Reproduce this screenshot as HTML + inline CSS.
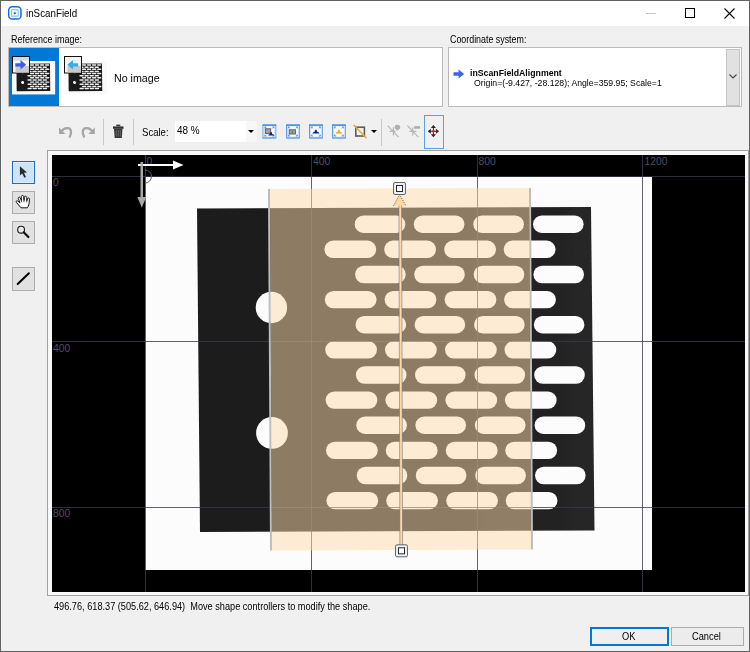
<!DOCTYPE html>
<html><head><meta charset="utf-8"><style>
*{margin:0;padding:0;box-sizing:border-box}
html,body{width:750px;height:652px;overflow:hidden}
body{background:#f0f0f0;font-family:"Liberation Sans",sans-serif;position:relative;color:#000}
.a{position:absolute}
.t{position:absolute;white-space:pre;line-height:1;transform-origin:0 0}
</style></head><body>
<!-- window frame -->
<div class="a" style="left:0;top:0;width:750px;height:26px;background:#fff"></div>
<div class="a" style="left:0;top:0;width:750px;height:1px;background:#626262"></div>
<div class="a" style="left:0;top:0;width:1px;height:652px;background:#626262"></div>
<div class="a" style="left:749px;top:0;width:1px;height:652px;background:#626262"></div>
<div class="a" style="left:0;top:651px;width:750px;height:1px;background:#626262"></div>

<!-- title -->
<svg class="a" style="left:7px;top:5px" width="16" height="16" viewBox="7 5 16 16">
<rect x="8.7" y="6.7" width="12.3" height="12.4" rx="3.6" fill="#fff" stroke="#0b6fe2" stroke-width="1.5"/>
<rect x="10.4" y="8.4" width="8.9" height="9" rx="1.8" fill="#d4e8fd" stroke="#fff" stroke-width="0.8"/>
<rect x="11.6" y="9.6" width="6.5" height="6.6" rx="1.2" fill="#fff" stroke="#8fc4f8" stroke-width="1.2"/>
<rect x="13" y="11" width="3.7" height="3.8" rx="0.8" fill="#e2f0fe"/>
<circle cx="14.8" cy="13.3" r="0.95" fill="#124399"/>
</svg>
<div class="t" style="left:26px;top:8px;font-size:11px;transform:scaleX(0.89)">inScanField</div>
<div class="a" style="left:646px;top:13px;width:10px;height:1px;background:#c8c8c8"></div>
<div class="a" style="left:685px;top:8px;width:10px;height:10px;border:1px solid #000"></div>
<svg class="a" style="left:724px;top:8px" width="11" height="11" viewBox="0 0 11 11"><path d="M0.5 0.5L10.5 10.5M10.5 0.5L0.5 10.5" stroke="#000" stroke-width="1.1"/></svg>

<!-- labels -->
<div class="t" style="left:11px;top:34px;font-size:10.5px;transform:scaleX(0.856)">Reference image:</div>
<div class="t" style="left:450px;top:34px;font-size:10.5px;transform:scaleX(0.844)">Coordinate system:</div>

<!-- reference listbox -->
<div class="a" style="left:8px;top:47px;width:435px;height:60px;background:#fff;border:1px solid #bababa"></div>
<div class="a" style="left:9px;top:48px;width:50px;height:58px;background:#0078d7"></div>
<div class="a" style="left:12px;top:61px;width:43px;height:33px;background:#fff"></div>


<svg class="a" style="left:8px;top:50px" width="100" height="50" viewBox="8 50 100 50">

<g transform="translate(12,61) scale(0.0851) translate(-145,-177)">
<rect x="145" y="177" width="507" height="393" fill="#fafafa"/>
<polygon points="197,208.5 591,207 594.5,530.5 200,532" fill="#1a1a1a"/>
<rect x="354.7" y="215.5" width="50.6" height="17.4" rx="8.7" fill="#f0f0f0"/>
<rect x="413.8" y="215.5" width="50.6" height="17.4" rx="8.7" fill="#f0f0f0"/>
<rect x="473.3" y="215.5" width="50.6" height="17.4" rx="8.7" fill="#f0f0f0"/>
<rect x="533.0" y="215.5" width="50.6" height="17.4" rx="8.7" fill="#f0f0f0"/>
<rect x="324.4" y="240.6" width="51.8" height="17.4" rx="8.7" fill="#f0f0f0"/>
<rect x="384.2" y="240.6" width="51.8" height="17.4" rx="8.7" fill="#f0f0f0"/>
<rect x="444.2" y="240.6" width="51.8" height="17.4" rx="8.7" fill="#f0f0f0"/>
<rect x="503.7" y="240.6" width="51.8" height="17.4" rx="8.7" fill="#f0f0f0"/>
<rect x="355.1" y="265.8" width="50.6" height="17.4" rx="8.7" fill="#f0f0f0"/>
<rect x="414.2" y="265.8" width="50.6" height="17.4" rx="8.7" fill="#f0f0f0"/>
<rect x="473.7" y="265.8" width="50.6" height="17.4" rx="8.7" fill="#f0f0f0"/>
<rect x="533.4" y="265.8" width="50.6" height="17.4" rx="8.7" fill="#f0f0f0"/>
<rect x="324.8" y="290.9" width="51.8" height="17.4" rx="8.7" fill="#f0f0f0"/>
<rect x="384.6" y="290.9" width="51.8" height="17.4" rx="8.7" fill="#f0f0f0"/>
<rect x="444.6" y="290.9" width="51.8" height="17.4" rx="8.7" fill="#f0f0f0"/>
<rect x="504.1" y="290.9" width="51.8" height="17.4" rx="8.7" fill="#f0f0f0"/>
<rect x="355.5" y="316.0" width="50.6" height="17.4" rx="8.7" fill="#f0f0f0"/>
<rect x="414.6" y="316.0" width="50.6" height="17.4" rx="8.7" fill="#f0f0f0"/>
<rect x="474.1" y="316.0" width="50.6" height="17.4" rx="8.7" fill="#f0f0f0"/>
<rect x="533.8" y="316.0" width="50.6" height="17.4" rx="8.7" fill="#f0f0f0"/>
<rect x="325.2" y="341.1" width="51.8" height="17.4" rx="8.7" fill="#f0f0f0"/>
<rect x="385.0" y="341.1" width="51.8" height="17.4" rx="8.7" fill="#f0f0f0"/>
<rect x="445.0" y="341.1" width="51.8" height="17.4" rx="8.7" fill="#f0f0f0"/>
<rect x="504.5" y="341.1" width="51.8" height="17.4" rx="8.7" fill="#f0f0f0"/>
<rect x="355.9" y="366.3" width="50.6" height="17.4" rx="8.7" fill="#f0f0f0"/>
<rect x="415.0" y="366.3" width="50.6" height="17.4" rx="8.7" fill="#f0f0f0"/>
<rect x="474.5" y="366.3" width="50.6" height="17.4" rx="8.7" fill="#f0f0f0"/>
<rect x="534.2" y="366.3" width="50.6" height="17.4" rx="8.7" fill="#f0f0f0"/>
<rect x="325.6" y="391.4" width="51.8" height="17.4" rx="8.7" fill="#f0f0f0"/>
<rect x="385.4" y="391.4" width="51.8" height="17.4" rx="8.7" fill="#f0f0f0"/>
<rect x="445.4" y="391.4" width="51.8" height="17.4" rx="8.7" fill="#f0f0f0"/>
<rect x="504.9" y="391.4" width="51.8" height="17.4" rx="8.7" fill="#f0f0f0"/>
<rect x="356.3" y="416.5" width="50.6" height="17.4" rx="8.7" fill="#f0f0f0"/>
<rect x="415.4" y="416.5" width="50.6" height="17.4" rx="8.7" fill="#f0f0f0"/>
<rect x="474.9" y="416.5" width="50.6" height="17.4" rx="8.7" fill="#f0f0f0"/>
<rect x="534.6" y="416.5" width="50.6" height="17.4" rx="8.7" fill="#f0f0f0"/>
<rect x="326.0" y="441.7" width="51.8" height="17.4" rx="8.7" fill="#f0f0f0"/>
<rect x="385.8" y="441.7" width="51.8" height="17.4" rx="8.7" fill="#f0f0f0"/>
<rect x="445.8" y="441.7" width="51.8" height="17.4" rx="8.7" fill="#f0f0f0"/>
<rect x="505.3" y="441.7" width="51.8" height="17.4" rx="8.7" fill="#f0f0f0"/>
<rect x="356.7" y="466.8" width="50.6" height="17.4" rx="8.7" fill="#f0f0f0"/>
<rect x="415.8" y="466.8" width="50.6" height="17.4" rx="8.7" fill="#f0f0f0"/>
<rect x="475.3" y="466.8" width="50.6" height="17.4" rx="8.7" fill="#f0f0f0"/>
<rect x="535.0" y="466.8" width="50.6" height="17.4" rx="8.7" fill="#f0f0f0"/>
<rect x="326.4" y="491.9" width="51.8" height="17.4" rx="8.7" fill="#f0f0f0"/>
<rect x="386.2" y="491.9" width="51.8" height="17.4" rx="8.7" fill="#f0f0f0"/>
<rect x="446.2" y="491.9" width="51.8" height="17.4" rx="8.7" fill="#f0f0f0"/>
<rect x="505.7" y="491.9" width="51.8" height="17.4" rx="8.7" fill="#f0f0f0"/>
<circle cx="271" cy="306.7" r="15.8" fill="#f0f0f0"/><circle cx="271.5" cy="432.7" r="15.8" fill="#f0f0f0"/>
</g>
<g transform="translate(12,56)">
<rect x="0.5" y="0.5" width="17" height="16.5" fill="#f4f4f4" stroke="#111" stroke-width="1"/>
<rect x="1" y="1" width="16" height="3.5" fill="#c6ddf1"/>
<rect x="3.5" y="10" width="13.5" height="6.5" fill="#c9c9c9"/>
</g>
<path d="M15.3 63.2H20.5V60L26.2 64.8L20.5 69.6V66.4H15.3Z" fill="#3a5de8"/>
<g transform="translate(64,61) scale(0.0851) translate(-145,-177)">
<rect x="145" y="177" width="507" height="393" fill="#fafafa"/>
<polygon points="197,208.5 591,207 594.5,530.5 200,532" fill="#1a1a1a"/>
<rect x="354.7" y="215.5" width="50.6" height="17.4" rx="8.7" fill="#f0f0f0"/>
<rect x="413.8" y="215.5" width="50.6" height="17.4" rx="8.7" fill="#f0f0f0"/>
<rect x="473.3" y="215.5" width="50.6" height="17.4" rx="8.7" fill="#f0f0f0"/>
<rect x="533.0" y="215.5" width="50.6" height="17.4" rx="8.7" fill="#f0f0f0"/>
<rect x="324.4" y="240.6" width="51.8" height="17.4" rx="8.7" fill="#f0f0f0"/>
<rect x="384.2" y="240.6" width="51.8" height="17.4" rx="8.7" fill="#f0f0f0"/>
<rect x="444.2" y="240.6" width="51.8" height="17.4" rx="8.7" fill="#f0f0f0"/>
<rect x="503.7" y="240.6" width="51.8" height="17.4" rx="8.7" fill="#f0f0f0"/>
<rect x="355.1" y="265.8" width="50.6" height="17.4" rx="8.7" fill="#f0f0f0"/>
<rect x="414.2" y="265.8" width="50.6" height="17.4" rx="8.7" fill="#f0f0f0"/>
<rect x="473.7" y="265.8" width="50.6" height="17.4" rx="8.7" fill="#f0f0f0"/>
<rect x="533.4" y="265.8" width="50.6" height="17.4" rx="8.7" fill="#f0f0f0"/>
<rect x="324.8" y="290.9" width="51.8" height="17.4" rx="8.7" fill="#f0f0f0"/>
<rect x="384.6" y="290.9" width="51.8" height="17.4" rx="8.7" fill="#f0f0f0"/>
<rect x="444.6" y="290.9" width="51.8" height="17.4" rx="8.7" fill="#f0f0f0"/>
<rect x="504.1" y="290.9" width="51.8" height="17.4" rx="8.7" fill="#f0f0f0"/>
<rect x="355.5" y="316.0" width="50.6" height="17.4" rx="8.7" fill="#f0f0f0"/>
<rect x="414.6" y="316.0" width="50.6" height="17.4" rx="8.7" fill="#f0f0f0"/>
<rect x="474.1" y="316.0" width="50.6" height="17.4" rx="8.7" fill="#f0f0f0"/>
<rect x="533.8" y="316.0" width="50.6" height="17.4" rx="8.7" fill="#f0f0f0"/>
<rect x="325.2" y="341.1" width="51.8" height="17.4" rx="8.7" fill="#f0f0f0"/>
<rect x="385.0" y="341.1" width="51.8" height="17.4" rx="8.7" fill="#f0f0f0"/>
<rect x="445.0" y="341.1" width="51.8" height="17.4" rx="8.7" fill="#f0f0f0"/>
<rect x="504.5" y="341.1" width="51.8" height="17.4" rx="8.7" fill="#f0f0f0"/>
<rect x="355.9" y="366.3" width="50.6" height="17.4" rx="8.7" fill="#f0f0f0"/>
<rect x="415.0" y="366.3" width="50.6" height="17.4" rx="8.7" fill="#f0f0f0"/>
<rect x="474.5" y="366.3" width="50.6" height="17.4" rx="8.7" fill="#f0f0f0"/>
<rect x="534.2" y="366.3" width="50.6" height="17.4" rx="8.7" fill="#f0f0f0"/>
<rect x="325.6" y="391.4" width="51.8" height="17.4" rx="8.7" fill="#f0f0f0"/>
<rect x="385.4" y="391.4" width="51.8" height="17.4" rx="8.7" fill="#f0f0f0"/>
<rect x="445.4" y="391.4" width="51.8" height="17.4" rx="8.7" fill="#f0f0f0"/>
<rect x="504.9" y="391.4" width="51.8" height="17.4" rx="8.7" fill="#f0f0f0"/>
<rect x="356.3" y="416.5" width="50.6" height="17.4" rx="8.7" fill="#f0f0f0"/>
<rect x="415.4" y="416.5" width="50.6" height="17.4" rx="8.7" fill="#f0f0f0"/>
<rect x="474.9" y="416.5" width="50.6" height="17.4" rx="8.7" fill="#f0f0f0"/>
<rect x="534.6" y="416.5" width="50.6" height="17.4" rx="8.7" fill="#f0f0f0"/>
<rect x="326.0" y="441.7" width="51.8" height="17.4" rx="8.7" fill="#f0f0f0"/>
<rect x="385.8" y="441.7" width="51.8" height="17.4" rx="8.7" fill="#f0f0f0"/>
<rect x="445.8" y="441.7" width="51.8" height="17.4" rx="8.7" fill="#f0f0f0"/>
<rect x="505.3" y="441.7" width="51.8" height="17.4" rx="8.7" fill="#f0f0f0"/>
<rect x="356.7" y="466.8" width="50.6" height="17.4" rx="8.7" fill="#f0f0f0"/>
<rect x="415.8" y="466.8" width="50.6" height="17.4" rx="8.7" fill="#f0f0f0"/>
<rect x="475.3" y="466.8" width="50.6" height="17.4" rx="8.7" fill="#f0f0f0"/>
<rect x="535.0" y="466.8" width="50.6" height="17.4" rx="8.7" fill="#f0f0f0"/>
<rect x="326.4" y="491.9" width="51.8" height="17.4" rx="8.7" fill="#f0f0f0"/>
<rect x="386.2" y="491.9" width="51.8" height="17.4" rx="8.7" fill="#f0f0f0"/>
<rect x="446.2" y="491.9" width="51.8" height="17.4" rx="8.7" fill="#f0f0f0"/>
<rect x="505.7" y="491.9" width="51.8" height="17.4" rx="8.7" fill="#f0f0f0"/>
<circle cx="271" cy="306.7" r="15.8" fill="#f0f0f0"/><circle cx="271.5" cy="432.7" r="15.8" fill="#f0f0f0"/>
</g>
<g transform="translate(64,56)">
<rect x="0.5" y="0.5" width="17" height="16.5" fill="#f4f4f4" stroke="#111" stroke-width="1"/>
<rect x="1" y="1" width="16" height="3.5" fill="#c6ddf1"/>
<rect x="3.5" y="10" width="13.5" height="6.5" fill="#c9c9c9"/>
</g><rect x="65" y="57" width="16" height="3.5" fill="#f6f6f6"/>
<path d="M78.2 63.2H73V60L67.3 64.8L73 69.6V66.4H78.2Z" fill="#37ace8"/>
<circle cx="22.6" cy="82.2" r="1.2" fill="#fff"/><circle cx="74.2" cy="82.2" r="1.2" fill="#fff"/>
</svg>
<div class="t" style="left:114px;top:73px;font-size:11.5px;transform:scaleX(0.928)">No image</div>

<!-- coordinate combo -->
<div class="a" style="left:448px;top:47px;width:294px;height:60px;background:#fff;border:1px solid #bababa"></div>
<div class="a" style="left:726px;top:49px;width:14px;height:57px;background:#e1e1e1;border:1px solid #c4c4c4"></div>
<svg class="a" style="left:729px;top:74px" width="8" height="5" viewBox="0 0 8 5"><path d="M0.5 0.5L4 4L7.5 0.5" stroke="#444" stroke-width="1.1" fill="none"/></svg>
<svg class="a" style="left:453px;top:69px" width="12" height="10" viewBox="453 69 12 10"><path d="M453.5 72.3H458.6V69.6L464.2 74L458.6 78.4V75.7H453.5Z" fill="#3d63e6"/></svg>
<div class="t" style="left:469.5px;top:68.8px;font-size:9.3px;font-weight:bold;transform:scaleX(0.94)">inScanFieldAlignment</div>
<div class="t" style="left:474px;top:78.5px;font-size:9px;transform:scaleX(0.966)">Origin=(-9.427, -28.128); Angle=359.95; Scale=1</div>

<!-- toolbar -->

<svg class="a" style="left:56px;top:122px" width="390" height="22" viewBox="56 122 390 22">
<defs>
<linearGradient id="fitg" x1="0" y1="0" x2="0" y2="1"><stop offset="0" stop-color="#ffffff"/><stop offset="1" stop-color="#dcebf8"/></linearGradient>

</defs>
<!-- undo -->
<path d="M59 127.5V134H65.5Z" fill="#a6a6a6"/>
<path d="M61.5 131.5C64 127.5 70.5 126.5 71 131.5C71.3 134 70.5 135.5 69.5 137.5" fill="none" stroke="#a6a6a6" stroke-width="2.3"/>
<!-- redo -->
<path d="M94.8 127.5V134H88.3Z" fill="#a6a6a6"/>
<path d="M92.3 131.5C89.8 127.5 83.3 126.5 82.8 131.5C82.5 134 83.3 135.5 84.3 137.5" fill="none" stroke="#a6a6a6" stroke-width="2.3"/>
<!-- trash -->
<rect x="116.3" y="124.6" width="4" height="1.6" fill="#3a3a3a"/>
<path d="M113 126.4H123.5V128.8H113Z" fill="#333"/>
<path d="M114 128.8H122.5L121.8 138H114.7Z" fill="#383838"/>
<path d="M116.3 130V136.5M118.3 130V136.5M120.3 130V136.5" stroke="#777" stroke-width="0.7"/>
<!-- fit 1 -->
<g transform="translate(262.5,124.5)">
<rect x="0.5" y="0.5" width="12.8" height="13" fill="#e9f1f9" stroke="#5b9de0" stroke-width="1"/>
<rect x="1.4" y="1.4" width="11" height="11.2" fill="#f6f9fc" stroke="#c4dcf3" stroke-width="0.8"/>
<rect x="0" y="0" width="13.8" height="1.3" fill="#3f8ad9"/>
<rect x="0" y="12.6" width="13.8" height="1.4" fill="#7eaedc"/>
<path d="M2.4 2.4l1.5 1.5M2.4 2.4h1.5M2.4 2.4v1.5M11.4 2.4l-1.5 1.5M11.4 2.4h-1.5M11.4 2.4v1.5M2.4 11.6l1.5 -1.5M2.4 11.6h1.5M2.4 11.6v-1.5M11.4 11.6l-1.5 -1.5M11.4 11.6h-1.5M11.4 11.6v-1.5" stroke="#4d7ae8" stroke-width="0.7"/>
</g>
<rect x="265.3" y="128.8" width="5.4" height="4.6" fill="#a0a0a0" stroke="#555" stroke-width="0.9"/>
<path d="M268 135.5H274.2L273.2 134.2H272.4L271.6 132H270.6L269.8 134.2H269Z" fill="#0c2090"/>
<!-- fit 2 -->
<g transform="translate(286,124.5)">
<rect x="0.5" y="0.5" width="12.8" height="13" fill="#e9f1f9" stroke="#5b9de0" stroke-width="1"/>
<rect x="1.4" y="1.4" width="11" height="11.2" fill="#f6f9fc" stroke="#c4dcf3" stroke-width="0.8"/>
<rect x="0" y="0" width="13.8" height="1.3" fill="#3f8ad9"/>
<rect x="0" y="12.6" width="13.8" height="1.4" fill="#7eaedc"/>
<path d="M2.4 2.4l1.5 1.5M2.4 2.4h1.5M2.4 2.4v1.5M11.4 2.4l-1.5 1.5M11.4 2.4h-1.5M11.4 2.4v1.5M2.4 11.6l1.5 -1.5M2.4 11.6h1.5M2.4 11.6v-1.5M11.4 11.6l-1.5 -1.5M11.4 11.6h-1.5M11.4 11.6v-1.5" stroke="#4d7ae8" stroke-width="0.7"/>
</g>
<rect x="289.2" y="129.8" width="6.2" height="4.2" fill="#a6a6a6" stroke="#555" stroke-width="0.9"/>
<circle cx="292.3" cy="131.9" r="0.6" fill="#222"/>
<!-- fit 3 -->
<g transform="translate(309,124.5)">
<rect x="0.5" y="0.5" width="12.8" height="13" fill="#e9f1f9" stroke="#5b9de0" stroke-width="1"/>
<rect x="1.4" y="1.4" width="11" height="11.2" fill="#f6f9fc" stroke="#c4dcf3" stroke-width="0.8"/>
<rect x="0" y="0" width="13.8" height="1.3" fill="#3f8ad9"/>
<rect x="0" y="12.6" width="13.8" height="1.4" fill="#7eaedc"/>
<path d="M2.4 2.4l1.5 1.5M2.4 2.4h1.5M2.4 2.4v1.5M11.4 2.4l-1.5 1.5M11.4 2.4h-1.5M11.4 2.4v1.5M2.4 11.6l1.5 -1.5M2.4 11.6h1.5M2.4 11.6v-1.5M11.4 11.6l-1.5 -1.5M11.4 11.6h-1.5M11.4 11.6v-1.5" stroke="#4d7ae8" stroke-width="0.7"/>
</g>
<path d="M312.4 133.4H319.4L318.3 131.9H317.3L316.5 129.8H315.3L314.5 131.9H313.5Z" fill="#0a2296"/>
<!-- fit 4 -->
<g transform="translate(332,124.5)">
<rect x="0.5" y="0.5" width="12.8" height="13" fill="#e9f1f9" stroke="#5b9de0" stroke-width="1"/>
<rect x="1.4" y="1.4" width="11" height="11.2" fill="#f6f9fc" stroke="#c4dcf3" stroke-width="0.8"/>
<rect x="0" y="0" width="13.8" height="1.3" fill="#3f8ad9"/>
<rect x="0" y="12.6" width="13.8" height="1.4" fill="#7eaedc"/>
<path d="M2.4 2.4l1.5 1.5M2.4 2.4h1.5M2.4 2.4v1.5M11.4 2.4l-1.5 1.5M11.4 2.4h-1.5M11.4 2.4v1.5M2.4 11.6l1.5 -1.5M2.4 11.6h1.5M2.4 11.6v-1.5M11.4 11.6l-1.5 -1.5M11.4 11.6h-1.5M11.4 11.6v-1.5" stroke="#4d7ae8" stroke-width="0.7"/>
</g>
<path d="M335.4 133.4H342.4L341.3 131.9H340.3L339.5 129.8H338.3L337.5 131.9H336.5Z" fill="#e8b400"/>
<!-- shape -->
<rect x="355.8" y="127.2" width="8.6" height="8.8" fill="none" stroke="#5a5c60" stroke-width="1.6"/>
<path d="M354 125.3L366 137.7" stroke="#eca923" stroke-width="1.5" stroke-linecap="round"/>
<!-- disabled pin 1 -->
<path d="M387.6 125.7L398.6 137.1M389.6 131.4H395.6M393.4 127.2V135.6" stroke="#b6b6b6" stroke-width="1.2"/>
<path d="M395 125.6C396.5 124 399.5 124.6 400.2 126.5C400.6 127.8 399.8 129.3 398.4 129.8L396.2 130.6C395 129.6 394 127.6 395 125.6Z" fill="#b0b0b0"/>
<circle cx="395.3" cy="129.6" r="0.9" fill="#e8e8e8"/>
<!-- disabled pin 2 -->
<path d="M407.4 125.7L418.4 137.1M409.4 131.4H416.4M412.7 127.6V135.4" stroke="#b6b6b6" stroke-width="1.2"/>
<rect x="414.2" y="126.2" width="5.9" height="2.5" fill="#ababab"/>
<!-- move -->
<path d="M433.4 125L436 128.1H430.8Z M433.4 137.3L436 134.2H430.8Z M427.7 131.25L430.9 128.7V133.8Z M439.1 131.25L435.9 128.7V133.8Z" fill="#2a2a2a"/>
<path d="M433.4 127.5V135M430 131.25H437" stroke="#2a2a2a" stroke-width="1"/>
<path d="M433.4 129.4L435 131.25L433.4 133.1L431.8 131.25Z" fill="#f21010"/>
</svg>
<div class="a" style="left:103px;top:119px;width:1px;height:26px;background:#c8c8c8"></div>
<div class="a" style="left:133px;top:119px;width:1px;height:26px;background:#c8c8c8"></div>
<div class="a" style="left:381px;top:119px;width:1px;height:27px;background:#c8c8c8"></div>
<div class="t" style="left:142px;top:127px;font-size:11.3px;transform:scaleX(0.847)">Scale:</div>
<div class="a" style="left:175px;top:121px;width:82px;height:21px;background:#fff"></div>
<div class="a" style="left:246px;top:121px;width:11px;height:21px;background:#f7f7f7"></div>
<div class="t" style="left:177px;top:124.5px;font-size:11.2px;transform:scaleX(0.89)">48 %</div>
<svg class="a" style="left:248px;top:130px" width="6" height="4" viewBox="0 0 6 4"><path d="M0 0H6L3 3Z" fill="#000"/></svg>
<svg class="a" style="left:371px;top:130px" width="6" height="4" viewBox="0 0 6 4"><path d="M0 0H6L3 3Z" fill="#000"/></svg>
<div class="a" style="left:424px;top:115px;width:20px;height:34px;border:1px solid #5aa2e4"></div>

<!-- left tools -->
<div class="a" style="left:12px;top:161px;width:23px;height:23px;background:#cce4f7;border:1px solid #2669b8;box-shadow:inset 0 0 0 1px #dcedfb"></div>
<div class="a" style="left:12px;top:191px;width:23px;height:23px;background:#e1e1e1;border:1px solid #adadad"></div>
<div class="a" style="left:12px;top:221px;width:23px;height:23px;background:#e1e1e1;border:1px solid #adadad"></div>

<svg class="a" style="left:12px;top:160px" width="24" height="132" viewBox="12 160 24 132">
<path d="M19.9 166.2V175.6L22.2 173.5L24.4 177.8L26 177L23.9 172.8L27 172.4Z" fill="#2b2b2b"/>
<!-- hand -->
<g transform="translate(14,193)">
<path d="M7 14.8L2.4 9.3C1.7 8.4 2.7 7.2 3.8 8L6 9.8L4.3 5.6C3.9 4.3 5.5 3.6 6.1 4.6L7.4 7.6L7.3 3.6C7.4 2.1 9.6 2.1 9.7 3.6L10 7.5L10.3 4.1C10.5 2.9 12.6 2.9 12.7 4.3L12.8 7.8L13.5 5.6C13.9 4.6 15.7 4.8 15.5 6.1L15 11C14.7 12.5 14 14 13.3 14.8Z" fill="#fff" stroke="#0c0c0c" stroke-width="0.95" stroke-linejoin="round"/>
<path d="M7.4 7.6L7.6 9.2M10 7.5L10 9.2M12.8 7.8L12.6 9.4" stroke="#0c0c0c" stroke-width="0.7"/>
</g>
<!-- magnifier -->
<circle cx="21.1" cy="229.7" r="3.4" fill="#e4ecf4" stroke="#151515" stroke-width="1.1"/>
<path d="M23.7 232.3L28.4 237" stroke="#111" stroke-width="2.2" stroke-linecap="round"/>
</svg>
<div class="a" style="left:12px;top:267px;width:23px;height:24px;background:#e1e1e1;border:1px solid #adadad"></div>
<svg class="a" style="left:12px;top:267px" width="23" height="24" viewBox="0 0 23 24"><path d="M5.7 17L16.9 6.3" stroke="#000" stroke-width="2" stroke-linecap="round"/></svg>

<!-- image view -->
<div class="a" style="left:47px;top:150px;width:702px;height:446px;border:1px solid #a0a0a0;background:#f8f8f8"></div>
<svg class="a" style="left:52px;top:155px" width="693" height="437" viewBox="52 155 693 437">
<rect x="52" y="155" width="693" height="437" fill="#000"/>
<rect x="145" y="177" width="507" height="393" fill="#fcfcfc"/>
<defs><linearGradient id="objg" x1="0" y1="0" x2="1" y2="0"><stop offset="0" stop-color="#1b1b1b"/><stop offset="0.6" stop-color="#1d1d1d"/><stop offset="1" stop-color="#262626"/></linearGradient><filter id="soft" x="-5%" y="-5%" width="110%" height="110%"><feGaussianBlur stdDeviation="0.45"/></filter></defs>
<g filter="url(#soft)">
<polygon points="197,208.5 591,207 594.5,530.5 200,532" fill="url(#objg)"/>
<rect x="354.7" y="215.5" width="50.6" height="17.4" rx="8.7" fill="#fcfcfc"/>
<rect x="413.8" y="215.5" width="50.6" height="17.4" rx="8.7" fill="#fcfcfc"/>
<rect x="473.3" y="215.5" width="50.6" height="17.4" rx="8.7" fill="#fcfcfc"/>
<rect x="533.0" y="215.5" width="50.6" height="17.4" rx="8.7" fill="#fcfcfc"/>
<rect x="324.4" y="240.6" width="51.8" height="17.4" rx="8.7" fill="#fcfcfc"/>
<rect x="384.2" y="240.6" width="51.8" height="17.4" rx="8.7" fill="#fcfcfc"/>
<rect x="444.2" y="240.6" width="51.8" height="17.4" rx="8.7" fill="#fcfcfc"/>
<rect x="503.7" y="240.6" width="51.8" height="17.4" rx="8.7" fill="#fcfcfc"/>
<rect x="355.1" y="265.8" width="50.6" height="17.4" rx="8.7" fill="#fcfcfc"/>
<rect x="414.2" y="265.8" width="50.6" height="17.4" rx="8.7" fill="#fcfcfc"/>
<rect x="473.7" y="265.8" width="50.6" height="17.4" rx="8.7" fill="#fcfcfc"/>
<rect x="533.4" y="265.8" width="50.6" height="17.4" rx="8.7" fill="#fcfcfc"/>
<rect x="324.8" y="290.9" width="51.8" height="17.4" rx="8.7" fill="#fcfcfc"/>
<rect x="384.6" y="290.9" width="51.8" height="17.4" rx="8.7" fill="#fcfcfc"/>
<rect x="444.6" y="290.9" width="51.8" height="17.4" rx="8.7" fill="#fcfcfc"/>
<rect x="504.1" y="290.9" width="51.8" height="17.4" rx="8.7" fill="#fcfcfc"/>
<rect x="355.5" y="316.0" width="50.6" height="17.4" rx="8.7" fill="#fcfcfc"/>
<rect x="414.6" y="316.0" width="50.6" height="17.4" rx="8.7" fill="#fcfcfc"/>
<rect x="474.1" y="316.0" width="50.6" height="17.4" rx="8.7" fill="#fcfcfc"/>
<rect x="533.8" y="316.0" width="50.6" height="17.4" rx="8.7" fill="#fcfcfc"/>
<rect x="325.2" y="341.1" width="51.8" height="17.4" rx="8.7" fill="#fcfcfc"/>
<rect x="385.0" y="341.1" width="51.8" height="17.4" rx="8.7" fill="#fcfcfc"/>
<rect x="445.0" y="341.1" width="51.8" height="17.4" rx="8.7" fill="#fcfcfc"/>
<rect x="504.5" y="341.1" width="51.8" height="17.4" rx="8.7" fill="#fcfcfc"/>
<rect x="355.9" y="366.3" width="50.6" height="17.4" rx="8.7" fill="#fcfcfc"/>
<rect x="415.0" y="366.3" width="50.6" height="17.4" rx="8.7" fill="#fcfcfc"/>
<rect x="474.5" y="366.3" width="50.6" height="17.4" rx="8.7" fill="#fcfcfc"/>
<rect x="534.2" y="366.3" width="50.6" height="17.4" rx="8.7" fill="#fcfcfc"/>
<rect x="325.6" y="391.4" width="51.8" height="17.4" rx="8.7" fill="#fcfcfc"/>
<rect x="385.4" y="391.4" width="51.8" height="17.4" rx="8.7" fill="#fcfcfc"/>
<rect x="445.4" y="391.4" width="51.8" height="17.4" rx="8.7" fill="#fcfcfc"/>
<rect x="504.9" y="391.4" width="51.8" height="17.4" rx="8.7" fill="#fcfcfc"/>
<rect x="356.3" y="416.5" width="50.6" height="17.4" rx="8.7" fill="#fcfcfc"/>
<rect x="415.4" y="416.5" width="50.6" height="17.4" rx="8.7" fill="#fcfcfc"/>
<rect x="474.9" y="416.5" width="50.6" height="17.4" rx="8.7" fill="#fcfcfc"/>
<rect x="534.6" y="416.5" width="50.6" height="17.4" rx="8.7" fill="#fcfcfc"/>
<rect x="326.0" y="441.7" width="51.8" height="17.4" rx="8.7" fill="#fcfcfc"/>
<rect x="385.8" y="441.7" width="51.8" height="17.4" rx="8.7" fill="#fcfcfc"/>
<rect x="445.8" y="441.7" width="51.8" height="17.4" rx="8.7" fill="#fcfcfc"/>
<rect x="505.3" y="441.7" width="51.8" height="17.4" rx="8.7" fill="#fcfcfc"/>
<rect x="356.7" y="466.8" width="50.6" height="17.4" rx="8.7" fill="#fcfcfc"/>
<rect x="415.8" y="466.8" width="50.6" height="17.4" rx="8.7" fill="#fcfcfc"/>
<rect x="475.3" y="466.8" width="50.6" height="17.4" rx="8.7" fill="#fcfcfc"/>
<rect x="535.0" y="466.8" width="50.6" height="17.4" rx="8.7" fill="#fcfcfc"/>
<rect x="326.4" y="491.9" width="51.8" height="17.4" rx="8.7" fill="#fcfcfc"/>
<rect x="386.2" y="491.9" width="51.8" height="17.4" rx="8.7" fill="#fcfcfc"/>
<rect x="446.2" y="491.9" width="51.8" height="17.4" rx="8.7" fill="#fcfcfc"/>
<rect x="505.7" y="491.9" width="51.8" height="17.4" rx="8.7" fill="#fcfcfc"/>
<circle cx="271.4" cy="307.5" r="15.7" fill="#fcfcfc"/>
<circle cx="272" cy="432.9" r="15.9" fill="#fcfcfc"/>
</g>
<rect x="145" y="155" width="1" height="437" fill="#39394e" fill-opacity="0.8"/>
<rect x="311" y="155" width="1" height="437" fill="#39394e" fill-opacity="0.8"/>
<rect x="477" y="155" width="1" height="437" fill="#39394e" fill-opacity="0.8"/>
<rect x="642" y="155" width="1" height="437" fill="#39394e" fill-opacity="0.8"/>
<rect x="52" y="176" width="693" height="1" fill="#39394e" fill-opacity="0.8"/>
<rect x="52" y="341" width="693" height="1" fill="#39394e" fill-opacity="0.8"/>
<rect x="52" y="507" width="693" height="1" fill="#39394e" fill-opacity="0.8"/>
<text x="146.5" y="164.6" font-size="10.4" fill="#4e4e66" font-family="Liberation Sans">0</text>
<text x="313.0" y="164.6" font-size="10.4" fill="#4e4e66" font-family="Liberation Sans">400</text>
<text x="478.5" y="164.6" font-size="10.4" fill="#4e4e66" font-family="Liberation Sans">800</text>
<text x="644.5" y="164.6" font-size="10.4" fill="#4e4e66" font-family="Liberation Sans">1200</text>
<text x="53" y="186.3" font-size="10.4" fill="#4e4e66" font-family="Liberation Sans">0</text>
<text x="53" y="351.7" font-size="10.4" fill="#4e4e66" font-family="Liberation Sans">400</text>
<text x="53" y="517.3" font-size="10.4" fill="#4e4e66" font-family="Liberation Sans">800</text>
<polygon points="270,189 529,188 531,549.5 272,550.5" fill="#fedaac" fill-opacity="0.5"/>
<polygon points="268,189 270,189 272,550.5 270,550.5" fill="#bdbdbd"/>
<polygon points="529,188 531,188 533,549.5 531,549.5" fill="#bdbdbd"/>
<polygon points="398.9,200 401.6,200 402.6,548 399.9,548" fill="#fcd8a6" stroke="#5e6274" stroke-width="0.6" stroke-opacity="0.85"/>
<polygon points="399.6,194.5 393.5,205.8 406,205.8" fill="#fdd8a5"/>
<path d="M393.5,205.8 L399.6,194.5 L406,205.8" fill="none" stroke="#5a5040" stroke-width="0.8" stroke-dasharray="1.2,1.2"/>
<rect x="393.5" y="182.5" width="12" height="12" rx="1.5" fill="#e8f1fa" stroke="#666" stroke-width="1"/>
<rect x="396.5" y="185.5" width="6" height="6" fill="#fff" stroke="#2a2a2a" stroke-width="1"/>
<rect x="395.5" y="544.8" width="12" height="12" rx="1.5" fill="#e8f1fa" stroke="#666" stroke-width="1"/>
<rect x="398.5" y="547.8" width="6" height="6" fill="#fff" stroke="#2a2a2a" stroke-width="1"/>
<path d="M145 170 A6.5 6.5 0 0 1 145 183" fill="none" stroke="#5c5c7c" stroke-width="1"/>
<rect x="138" y="164" width="37" height="2" fill="#fff"/>
<polygon points="173,160.5 183.5,165 173,169.5" fill="#fff"/>
<rect x="140.5" y="162" width="2.5" height="36" fill="#a8a8a8"/>
<polygon points="137.3,197 146.3,197 141.8,207.5" fill="#a8a8a8"/>
</svg>

<!-- status -->
<div class="t" style="left:54px;top:600.5px;font-size:10.8px;transform:scaleX(0.85)">496.76, 618.37 (505.62, 646.94)  Move shape controllers to modify the shape.</div>

<!-- buttons -->
<div class="a" style="left:590px;top:627px;width:79px;height:19px;border:2px solid #0078d7;background:#efefef"></div>
<div class="t" style="left:622px;top:630px;font-size:11.6px;transform:scaleX(0.8)">OK</div>
<div class="a" style="left:671px;top:627px;width:73px;height:19px;border:1px solid #adadad;background:#ececec"></div>
<div class="t" style="left:691.5px;top:630px;font-size:11.6px;transform:scaleX(0.8)">Cancel</div>
</body></html>
